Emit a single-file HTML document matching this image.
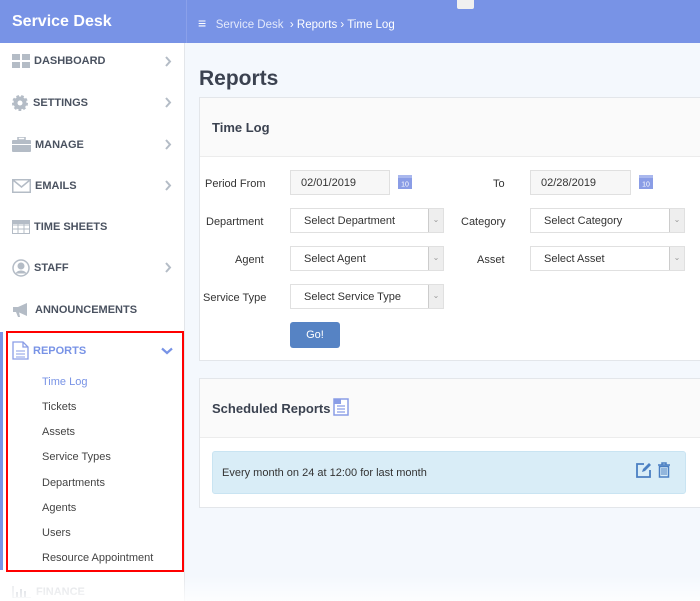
<!DOCTYPE html>
<html><head><style>
*{box-sizing:border-box;margin:0;padding:0}
body{width:700px;height:601px;overflow:hidden;font-family:"Liberation Sans",sans-serif;background:#f4f8fd;position:relative;color:#333}
.a{position:absolute}
.top{left:0;top:0;width:700px;height:43px;background:#7893e6}
.logo{left:12px;top:13px;color:#fff;font-weight:bold;font-size:16px}
.bc{left:198px;top:15px;color:#fff;font-size:11.5px}
.side{left:0;top:43px;width:185px;height:558px;background:#fff;border-right:1px solid #e3e6ea}
.nav{left:12px;font-size:11px;font-weight:bold;color:#4a5260;display:flex;align-items:center}
.nav svg{margin-right:4px}
.chev{left:164px}
.sub{left:42px;font-size:11px;color:#444}
.lbl{font-size:11px;color:#333}
.inp{height:25px;border:1px solid #e0e0e0;background:#f7f7f7;font-size:11px;padding:6px 10px}
.sel{height:25px;border:1px solid #e0e0e0;background:#fff;font-size:11px;padding:6px 13px}
.sel i{position:absolute;right:0;top:0;width:15px;height:23px;background:#eee;border-left:1px solid #ccc;font-style:normal;color:#999;font-size:8px;text-align:center;line-height:22px}
.cal{width:16px;height:16px}
</style></head><body>
<div class="a top"></div>
<div class="a logo">Service Desk</div>
<div class="a" style="left:186px;top:0;width:1px;height:43px;background:#8aa0ea"></div>
<div class="a bc"><span style="font-size:14px;font-weight:bold">&#8801;</span>&nbsp;&nbsp; <span style="color:#e3e9fb">Service Desk</span> &nbsp;› Reports › Time Log</div>
<div class="a" style="left:457px;top:0;width:17px;height:9px;background:#f0f0f0;border-radius:0 0 2px 2px"></div>

<div class="a side"></div>
<div class="a nav" style="top:54px"><svg width="18" height="14"><rect x="0" y="0" width="8" height="6" fill="#b4bcc6"/><rect x="10" y="0" width="8" height="6" fill="#b4bcc6"/><rect x="0" y="8" width="8" height="6" fill="#b4bcc6"/><rect x="10" y="8" width="8" height="6" fill="#b4bcc6"/></svg>DASHBOARD</div>
<div class="a nav" style="top:95px"><svg width="17" height="16"><circle cx="8" cy="8" r="6.5" fill="#b4bcc6" stroke="#b4bcc6" stroke-width="3" stroke-dasharray="2.5 2"/><circle cx="8" cy="8" r="2.5" fill="#fff"/></svg>SETTINGS</div>
<div class="a nav" style="top:137px"><svg width="19" height="15"><rect x="6" y="0" width="7" height="3" fill="none" stroke="#b4bcc6" stroke-width="1.5"/><rect x="0" y="3" width="19" height="12" rx="1" fill="#b4bcc6"/><rect x="0" y="7" width="19" height="1" fill="#fff"/></svg>MANAGE</div>
<div class="a nav" style="top:179px"><svg width="19" height="14"><rect x=".75" y=".75" width="17.5" height="12.5" fill="none" stroke="#b4bcc6" stroke-width="1.5"/><path d="M1 1l8.5 7 8.5-7" fill="none" stroke="#b4bcc6" stroke-width="1.5"/></svg>EMAILS</div>
<div class="a nav" style="top:220px"><svg width="18" height="14"><rect x=".5" y=".5" width="17" height="13" fill="#fff" stroke="#b4bcc6"/><path d="M0 5h18M0 9h18M6 0v14M12 0v14" stroke="#b4bcc6"/><rect x="0" y="0" width="18" height="4" fill="#b4bcc6"/></svg>TIME SHEETS</div>
<div class="a nav" style="top:259px"><svg width="18" height="18"><circle cx="9" cy="9" r="8" fill="none" stroke="#b4bcc6" stroke-width="1.5"/><circle cx="9" cy="7" r="3.5" fill="#b4bcc6"/><path d="M3.5 14.5c2-4 9-4 11 0" fill="#b4bcc6"/></svg>STAFF</div>
<div class="a nav" style="top:302px"><svg width="19" height="16"><path d="M1 5h5l9-4v13l-9-4H1z" fill="#b4bcc6"/><path d="M4 10l2 5h2l-1-5" fill="#b4bcc6"/></svg>ANNOUNCEMENTS</div>
<svg class="a chev" style="top:56px" width="8" height="11"><path d="M2 1l4 4.5L2 10" fill="none" stroke="#b4bcc6" stroke-width="2"/></svg>
<svg class="a chev" style="top:97px" width="8" height="11"><path d="M2 1l4 4.5L2 10" fill="none" stroke="#b4bcc6" stroke-width="2"/></svg>
<svg class="a chev" style="top:139px" width="8" height="11"><path d="M2 1l4 4.5L2 10" fill="none" stroke="#b4bcc6" stroke-width="2"/></svg>
<svg class="a chev" style="top:180px" width="8" height="11"><path d="M2 1l4 4.5L2 10" fill="none" stroke="#b4bcc6" stroke-width="2"/></svg>
<svg class="a chev" style="top:262px" width="8" height="11"><path d="M2 1l4 4.5L2 10" fill="none" stroke="#b4bcc6" stroke-width="2"/></svg>

<div class="a" style="left:0;top:332px;width:3px;height:238px;background:#7893e6"></div>
<div class="a nav" style="top:341px;color:#7893e6"><svg width="17" height="19"><path d="M1 1h10l5 5v12H1z" fill="#fff" stroke="#8a9de6" stroke-width="1.3"/><path d="M11 1v5h5" fill="none" stroke="#8a9de6" stroke-width="1.3"/><path d="M4 10h9M4 13h9M4 16h9" stroke="#8a9de6"/></svg>REPORTS</div>
<svg class="a" style="left:161px;top:347px" width="12" height="8"><path d="M1 1.5l5 4.5 5-4.5" fill="none" stroke="#7893e6" stroke-width="2.2"/></svg>
<div class="a sub" style="top:376px;color:#7893e6">Time Log</div>
<div class="a sub" style="top:401px">Tickets</div>
<div class="a sub" style="top:426px">Assets</div>
<div class="a sub" style="top:451px">Service Types</div>
<div class="a sub" style="top:477px">Departments</div>
<div class="a sub" style="top:502px">Agents</div>
<div class="a sub" style="top:527px">Users</div>
<div class="a sub" style="top:552px">Resource Appointment</div>
<div class="a" style="left:6px;top:331px;width:178px;height:241px;border:2px solid #f00"></div>
<div class="a nav" style="top:586px;color:#c8ccd2;opacity:.7"><svg width="20" height="12"><path d="M1 0v12h18" fill="none" stroke="#b4bcc6"/><rect x="4" y="6" width="2" height="5" fill="#b4bcc6"/><rect x="8" y="3" width="2" height="8" fill="#b4bcc6"/><rect x="12" y="5" width="2" height="6" fill="#b4bcc6"/></svg>FINANCE</div>
<div class="a" style="left:0;top:575px;width:700px;height:26px;background:linear-gradient(rgba(255,255,255,0),rgba(255,255,255,.8))"></div>

<div class="a" style="left:199px;top:67px;font-size:21px;font-weight:bold;color:#3b4250">Reports</div>
<div class="a" style="left:199px;top:97px;width:505px;height:264px;background:#fff;border:1px solid #e3e6ea"></div>
<div class="a" style="left:200px;top:98px;width:504px;height:59px;background:#fafafa;border-bottom:1px solid #ececec"></div>
<div class="a" style="left:212px;top:120px;font-size:13px;font-weight:bold;color:#3b4250">Time Log</div>

<div class="a lbl" style="left:205px;top:178px">Period From</div>
<div class="a inp" style="left:290px;top:170px;width:100px">02/01/2019</div>
<svg class="a cal" style="left:397px;top:173px"><rect x="1" y="2" width="14" height="14" fill="#8a9de6"/><rect x="1" y="2" width="14" height="3" fill="#aab8ee"/><text x="8" y="13.5" font-size="7" fill="#fff" text-anchor="middle" font-family="Liberation Sans">10</text></svg>
<div class="a lbl" style="left:493px;top:178px">To</div>
<div class="a inp" style="left:530px;top:170px;width:101px">02/28/2019</div>
<svg class="a cal" style="left:638px;top:173px"><rect x="1" y="2" width="14" height="14" fill="#8a9de6"/><rect x="1" y="2" width="14" height="3" fill="#aab8ee"/><text x="8" y="13.5" font-size="7" fill="#fff" text-anchor="middle" font-family="Liberation Sans">10</text></svg>

<div class="a lbl" style="left:206px;top:216px">Department</div>
<div class="a sel" style="left:290px;top:208px;width:154px">Select Department<i>⌄</i></div>
<div class="a lbl" style="left:461px;top:216px">Category</div>
<div class="a sel" style="left:530px;top:208px;width:155px">Select Category<i>⌄</i></div>

<div class="a lbl" style="left:235px;top:254px">Agent</div>
<div class="a sel" style="left:290px;top:246px;width:154px">Select Agent<i>⌄</i></div>
<div class="a lbl" style="left:477px;top:254px">Asset</div>
<div class="a sel" style="left:530px;top:246px;width:155px">Select Asset<i>⌄</i></div>

<div class="a lbl" style="left:203px;top:292px">Service Type</div>
<div class="a sel" style="left:290px;top:284px;width:154px">Select Service Type<i>⌄</i></div>
<div class="a" style="left:290px;top:322px;width:50px;height:26px;background:#5683c4;border-radius:3px;color:#fff;font-size:11px;text-align:center;line-height:26px">Go!</div>

<div class="a" style="left:199px;top:378px;width:505px;height:130px;background:#fff;border:1px solid #e3e6ea"></div>
<div class="a" style="left:200px;top:379px;width:504px;height:59px;background:#fafafa;border-bottom:1px solid #ececec"></div>
<div class="a" style="left:212px;top:401px;font-size:13px;font-weight:bold;color:#3b4250">Scheduled Reports</div>
<svg class="a" style="left:333px;top:398px" width="16" height="18"><rect x="1" y="1" width="14" height="16" fill="#fff" stroke="#8a9de6" stroke-width="1.5"/><path d="M4 8h8M4 11h8M4 14h8" stroke="#8a9de6" stroke-width="1.3"/><rect x="1" y="1" width="7" height="5" fill="#8a9de6"/></svg>
<div class="a" style="left:212px;top:451px;width:474px;height:43px;background:#d9edf7;border:1px solid #c9e4f2;border-radius:3px"></div>
<div class="a" style="left:222px;top:467px;font-size:11px;color:#333">Every month on 24 at 12:00 for last month</div>
<svg class="a" style="left:636px;top:462px" width="16" height="16"><path d="M8 2H1v13h13V8" fill="none" stroke="#4a7fc2" stroke-width="1.8"/><path d="M6 10l1-3 6-6 2 2-6 6z" fill="#4a7fc2"/></svg>
<svg class="a" style="left:657px;top:462px" width="14" height="16"><path d="M1 3h12M5 3V1h4v2" fill="none" stroke="#4a7fc2" stroke-width="1.5"/><rect x="2.5" y="4.5" width="9" height="10.5" fill="none" stroke="#4a7fc2" stroke-width="1.5"/><path d="M5 6v7M7 6v7M9 6v7" stroke="#4a7fc2"/></svg>
</body></html>
